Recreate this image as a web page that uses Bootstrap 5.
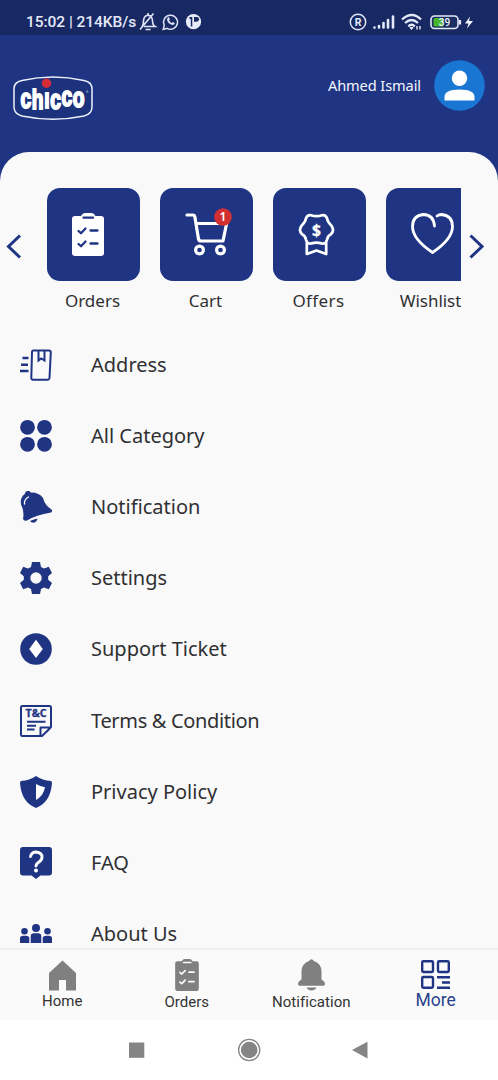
<!DOCTYPE html>
<html lang="en">
<head>
<meta charset="utf-8">
<meta name="viewport" content="width=device-width, initial-scale=1">
<title>Chicco – More</title>
<link rel="stylesheet" href="https://cdn.jsdelivr.net/npm/bootstrap@5.3.0/dist/css/bootstrap.min.css">
<style>
:root{--navy:#1f3584;--ink:#303032}
body{font-family:"Noto Sans","Open Sans",sans-serif;color:var(--ink);background:#1f3584}
svg{display:block;flex:none;overflow:visible}
.phone{width:498px;height:1080px}
.status{height:35px;background:#182863;color:#e4e9f8;padding:8px 23px 0 26px;font:500 15.5px/28px Roboto,sans-serif}
.clock-text{width:109px;letter-spacing:-.05px}
.brandbar{height:117px;padding:25px 13px 0 14px}
.user-name{font-size:14.6px;line-height:50px;color:#f3f5fc;letter-spacing:-.1px}
.sheet{background:#f9f9fa;border-radius:29px 29px 0 0;min-height:0}
.shortcuts{height:177.5px;padding-top:36px}
.arrow{padding-top:46px}
.arrow-prev{width:47px;padding-left:7px}
.arrow-next{width:37px;padding-left:7px}
.strip{width:414px}
.strip-row{gap:20px}
.tile{width:93px}
.tile-box{width:93px;height:93px;border-radius:13px;background:var(--navy)}
.tile-name{font-size:17px;line-height:24px;margin:8px 2px 0 0}
.menu-row{height:71.1px;padding:0 20px;color:var(--ink)}
.menu-name{font-size:20px;line-height:28px;margin-left:39px}
.tabs{height:72px;background:#fafafa;border-top:2px solid #f1f1f2;font:15px/18px Roboto,sans-serif;color:#333}
.tab-col{width:124.5px;padding-top:9px}
.tab-name{margin-top:2px}
.sysnav{height:60px;background:#fff}
</style>
</head>
<body>
<svg width="0" height="0" class="position-absolute" aria-hidden="true">
  <defs>
    <mask id="clipmask" maskUnits="userSpaceOnUse" x="0" y="0" width="32" height="43">
      <rect width="32" height="43" fill="#fff"/>
      <path d="M11.500 4.700h9.500" stroke="#000" stroke-width="2.300" stroke-linecap="round"/>
      <path d="M6.500 18l2.500 2.200 4.500-4.700M18.500 17.500h7M6.500 31l2.500 2.200 4.500-4.700M18.500 30.500h7" fill="none" stroke="#000" stroke-width="2.300" stroke-linecap="round" stroke-linejoin="round"/>
    </mask>
    <symbol id="clip" viewBox="0 0 32 43">
      <path mask="url(#clipmask)" d="M3 3h6q1.500-3 4-3h6.500q2.500 0 4 3H29q3 0 3 3v34q0 3-3 3H3q-3 0-3-3V6q0-3 3-3z" fill="currentColor"/>
    </symbol>
  </defs>
</svg>
<div class="phone d-flex flex-column overflow-hidden">
  <div class="status d-flex flex-shrink-0">
    <span class="clock-text text-nowrap">15:02 | 214KB/s</span>
    <svg style="margin:4px 0 0 4px" width="18" height="20" viewBox="0 0 18 20" fill="none" stroke="#dfe5f6" stroke-width="1.600"><path d="M3 14.500q1.500-1.500 1.500-6Q5 3.500 9 3.200q4 .3 4.500 5.300 0 4.500 2.500 6H5M9 1v2M6.500 17.500h5M1 17.500L14.500 1.500"/></svg>
    <svg style="margin:5px 0 0 5px" width="17" height="18" viewBox="0 0 17 18"><path d="M1.200 16.500l1-4.200A7 7 0 1 1 5 15.300z" fill="none" stroke="#dfe5f6" stroke-width="1.500"/><path d="M5.500 5q1.500-1.500 2 .3l.3 1-.7 1.200q1 1.700 2.700 2.400l1.200-1 1.700 1q0 2-2.200 2Q6 11 5 7z" fill="#dfe5f6"/></svg>
    <svg style="margin:5px 0 0 6px" width="16" height="18" viewBox="0 0 16 18"><circle cx="8.500" cy="8.700" r="7.600" fill="#e8ecf8"/><path d="M4.500 4h2.800v9.500H5.800V6H4.500zM9 4h3q2.500.5 2 3-1 2-3 1.800H9z" fill="#182863"/></svg>
    <svg class="ms-auto" style="margin-top:5px" width="18" height="18" viewBox="0 0 18 18"><circle cx="9" cy="9" r="7.700" fill="none" stroke="#dfe5f6" stroke-width="1.500"/><text x="9" y="12.800" text-anchor="middle" font-family="Roboto" font-size="10.500" font-weight="700" fill="#e8ecf8">R</text></svg>
    <svg style="margin:7px 0 0 6px" width="22" height="14" viewBox="0 0 22 14" stroke="#e4e9f8" stroke-width="2.600" stroke-linecap="round"><path d="M1.500 12.500v.1M6 12.500V11M10.500 12.500V8M15 12.500V5M20 12.500V1.500"/></svg>
    <svg style="margin:6px 0 0 6px" width="22" height="17" viewBox="0 0 22 17" fill="none" stroke="#e4e9f8" stroke-width="2.300"><path d="M1 5.500Q11-3.500 20 5.500M4 9q6.500-6 13 0M7.300 12.300q3.300-3 6.500 0"/><path d="M9 13.500h3l-1.500 2z" fill="#e4e9f8" stroke-width="1"/><path d="M16 12v3.500M19 12v3.500" stroke-width="1.400"/></svg>
    <svg style="margin:7px 1px 0 7px" width="44" height="15" viewBox="0 0 44 15"><rect x="1" y="1" width="27" height="12.500" rx="3.500" fill="#1b2e63" stroke="#e4e9f8" stroke-width="1.600"/><rect x="3.500" y="3" width="10" height="8.500" rx="1.500" fill="#45b52c"/><path d="M30 5v4.500" stroke="#e4e9f8" stroke-width="2.200"/><text x="14.500" y="11" text-anchor="middle" font-family="Roboto" font-size="10" font-weight="500" fill="#f2f5fb">39</text><path d="M40 1.500l-5 7h3.500L37 13.500l6-7.500h-4z" fill="#f2f5fb"/></svg>
  </div>

  <header class="brandbar d-flex justify-content-between flex-shrink-0">
    <svg style="margin:16px 0 0 -1px" width="80" height="45" viewBox="0 0 80 45">
      <path d="M9 4.500Q40-2.500 71 4.500 79 6 79 13v18q0 7-8 9-31 6.500-62 0-8-2-8-9V13Q1 6 9 4.500z" fill="#1c327c" stroke="#eef1fa" stroke-width="1.500"/>
      <g transform="translate(7.500 31.500) scale(.7 1)">
        <text font-family="Liberation Sans" font-weight="700" font-size="27.500" fill="#fff" stroke="#fff" stroke-width="2" letter-spacing=".9">c<tspan dy="1">h</tspan><tspan dy="-1">ı</tspan><tspan dy="1">c</tspan><tspan dy="-2.500">c</tspan><tspan dy="1">o</tspan></text>
      </g>
      <circle cx="33.500" cy="7.300" r="4.700" fill="#d82b38"/>
      <circle cx="74.300" cy="15.500" r=".8" fill="none" stroke="#dfe5f6" stroke-width=".5"/>
    </svg>
    <div class="d-flex">
      <span class="user-name">Ahmed Ismail</span>
      <svg style="margin-left:13px" width="51" height="51" viewBox="0 0 51 51"><circle cx="25.500" cy="25.500" r="25.300" fill="#1976d3"/><circle cx="25.500" cy="18.300" r="7.700" fill="#fff"/><path d="M10.500 40.500v-3.500q0-7.500 15-7.500t15 7.500v3.500z" fill="#fff"/></svg>
    </div>
  </header>

  <main class="sheet flex-grow-1 overflow-hidden">
    <section class="shortcuts d-flex">
      <div class="arrow arrow-prev flex-shrink-0"><svg width="15" height="25" viewBox="0 0 15 25" fill="none" stroke="#1f3584" stroke-width="3"><path d="M13 1.500L1.500 12.500 13 23.500"/></svg></div>
      <div class="strip overflow-hidden flex-shrink-0">
        <div class="strip-row d-flex">
          <div class="tile d-flex flex-column align-items-center flex-shrink-0">
            <div class="tile-box"><svg style="margin:25px 0 0 25px" width="32" height="43" color="#fff"><use href="#clip"/></svg></div>
            <span class="tile-name">Orders</span>
          </div>
          <div class="tile d-flex flex-column align-items-center flex-shrink-0">
            <div class="tile-box position-relative">
              <svg style="margin:24px 0 0 25px" width="44" height="45" viewBox="0 0 44 45" fill="none" stroke="#fff" stroke-width="3.200" stroke-linecap="round" stroke-linejoin="round"><path d="M2 3h6.500q1 0 1.300 1.500L13.500 27q.5 2 2.500 2h22l3.500-17M11 11.500h22"/><circle cx="14.500" cy="38" r="3.900"/><circle cx="35.500" cy="38" r="3.900"/></svg>
              <svg class="position-absolute" style="left:54px;top:20px" width="18" height="18" viewBox="0 0 18 18"><circle cx="9" cy="9" r="8.800" fill="#d32f31"/><text x="9" y="13.300" text-anchor="middle" font-family="Noto Sans" font-size="12" font-weight="600" fill="#fff">1</text></svg>
            </div>
            <span class="tile-name">Cart</span>
          </div>
          <div class="tile d-flex flex-column align-items-center flex-shrink-0">
            <div class="tile-box"><svg style="margin:25px 0 0 25px" width="37" height="43" viewBox="0 0 37 43" fill="none" stroke="#fff" stroke-width="2.700" stroke-linejoin="round"><path d="M13 2.200q5.500 2 11 0 3.500-.7 5 3 .5 4 4 7 4 5 0 9-3.500 2-4 5.500-1 4.500-5.500 3.700-5-1.700-10 0-4.500.8-5.500-3.700-.5-3.500-4-5.500-4-4 0-9 3.500-3 4-7 1.500-3.700 5-3zM8.800 29.500V41l9.700-3.500 9.700 3.500V29.500"/><text transform="translate(18.500 22.500) scale(.95 1)" text-anchor="middle" font-family="Noto Sans" font-size="16.500" font-weight="700" fill="#fff" stroke="#fff" stroke-width=".3">$</text></svg></div>
            <span class="tile-name" style="letter-spacing:.4px">Offers</span>
          </div>
          <div class="tile d-flex flex-column align-items-center flex-shrink-0">
            <div class="tile-box"><svg style="margin:25px 0 0 25px" width="43" height="42" viewBox="0 0 43 42" fill="none" stroke="#fff" stroke-width="2.800" stroke-linecap="round" stroke-linejoin="round"><path d="M23.500 13Q22.500 1.700 12.500 1.500 1.500 2.500 1.500 13.500 1.500 26 21.500 39.500 41.500 26 41.500 13.500q0-11-11-12-2.500 0-4.500 1.500"/></svg></div>
            <span class="tile-name text-nowrap" style="letter-spacing:-.05px;margin-right:4px">Wishlist</span>
          </div>
        </div>
      </div>
      <div class="arrow arrow-next flex-shrink-0"><svg width="16" height="25" viewBox="0 0 16 25" fill="none" stroke="#1f3584" stroke-width="3"><path d="M2.500 1.500L14 12.500l-11.500 11"/></svg></div>
    </section>

    <nav class="d-flex flex-column">
      <a class="menu-row d-flex align-items-center flex-shrink-0 text-decoration-none"><svg width="32" height="32" viewBox="0 0 32 32" fill="none" stroke="#1f3584"><path d="M13 1.500h16q1.800 0 1.800 2L29.500 29q-.2 1.700-1.800 1.700H13q-1.800 0-1.700-2L12 3q0-1.500 1-1.500zM18.500 2v9.500l2.700-2 3.300 2V2" stroke-width="2"/><path d="M2.500 9h6M1 15.700h7M0 22h8.500" stroke-width="2.500"/></svg><span class="menu-name">Address</span></a>
      <a class="menu-row d-flex align-items-center flex-shrink-0 text-decoration-none"><svg width="32" height="32" viewBox="0 0 32 32" fill="#1f3584"><circle cx="7.500" cy="7.300" r="7.400"/><circle cx="24.500" cy="7.300" r="7.400"/><circle cx="7.500" cy="24.300" r="7.400"/><circle cx="24.500" cy="24.300" r="7.400"/></svg><span class="menu-name">All Category</span></a>
      <a class="menu-row d-flex align-items-center flex-shrink-0 text-decoration-none"><svg width="32" height="32" viewBox="0 0 32 32"><path d="M4.800 3Q5.500-.5 8.500.1q1.500 0 2 1.400 8.500-.3 12.500 5.500 2 7.500 8.500 11.500 1.500 2-.5 3-15 2.500-24 8-3.500.8-4-1.700Q4.500 21 1.200 14-.5 7 4.800 3zM10 30q4-2 7.500-2.500-.5 3.500-4 4.300-2.500 0-3.500-1.800z" fill="#1f3584"/><path d="M4.500 13Q4 8.500 8.500 6" fill="none" stroke="#f9f9fa" stroke-width="1.300" stroke-linecap="round"/></svg><span class="menu-name">Notification</span></a>
      <a class="menu-row d-flex align-items-center flex-shrink-0 text-decoration-none"><svg width="32" height="32" viewBox="0 0 32 32"><path fill="#1f3584" fill-rule="evenodd" d="M12 0h8l1 5 3 1.600 4.800-1.800L32 11l-3.800 3.300v3.400L32 21l-3.200 6.200-4.800-1.800-3 1.600-1 5h-8l-1-5-3-1.600-4.800 1.800L0 21l3.800-3.300v-3.400L0 11l3.200-6.200L8 6.600 11 5zM16 10.300a5.700 5.700 0 1 0 0 11.400 5.700 5.700 0 0 0 0-11.400z"/></svg><span class="menu-name">Settings</span></a>
      <a class="menu-row d-flex align-items-center flex-shrink-0 text-decoration-none"><svg width="32" height="32" viewBox="0 0 32 32"><circle cx="16" cy="16" r="15.800" fill="#1f3584"/><path d="M16 6.800L22.800 16 16 25 9.200 16z" fill="#fff"/></svg><span class="menu-name">Support Ticket</span></a>
      <a class="menu-row d-flex align-items-center flex-shrink-0 text-decoration-none"><svg width="32" height="32" viewBox="0 0 32 32" fill="none" stroke="#1f3584" stroke-width="2" stroke-linejoin="round"><path d="M2.500 1h27q1.500 0 1.500 1.500V22q-4 4.500-9 9H2.500Q1 31 1 29.500v-27Q1 1 2.500 1zM20.500 31v-8.500H31M7 16.700h18.500M7 20.800h9M7 24.500h7.500"/><text x="16" y="12.300" text-anchor="middle" font-family="Open Sans" font-size="10" font-weight="700" fill="#1f3584" stroke-width=".3" textLength="21" lengthAdjust="spacingAndGlyphs">T&amp;C</text></svg><span class="menu-name" style="letter-spacing:-.33px">Terms &amp; Condition</span></a>
      <a class="menu-row d-flex align-items-center flex-shrink-0 text-decoration-none"><svg width="32" height="32" viewBox="0 0 32 32"><path d="M16 0q6.500 4.500 15 5 1 .5 1 2-1.500 19.500-16 25Q1.500 26.500 0 7q0-1.500 1-2 8.500-.5 15-5z" fill="#1f3584"/><path d="M16 8q4.500 2.500 9 3.300-1.500 8.500-9 12.700z" fill="#fff"/></svg><span class="menu-name">Privacy Policy</span></a>
      <a class="menu-row d-flex align-items-center flex-shrink-0 text-decoration-none"><svg width="32" height="32" viewBox="0 0 32 32"><path d="M3 0h26q3 0 3 3v22.500q0 3-3 3h-8.500L16 32l-4.500-3.500H3q-3 0-3-3V3q0-3 3-3z" fill="#1f3584"/><path d="M10.500 9.500q1-4.500 5.700-4.500 5.800.5 5.800 5.300 0 2.700-3 4.700-3 1.800-3 4" fill="none" stroke="#fff" stroke-width="2.900" stroke-linecap="round"/><circle cx="16" cy="23.500" r="2" fill="#fff"/></svg><span class="menu-name">FAQ</span></a>
      <a class="menu-row d-flex align-items-center flex-shrink-0 text-decoration-none"><svg width="32" height="19" viewBox="0 0 32 19" fill="#1f3584"><circle cx="16" cy="4" r="4"/><circle cx="4.500" cy="7.300" r="3.300"/><circle cx="27.500" cy="7.300" r="3.300"/><path d="M10.700 19v-6.500q0-3.300 3.300-3.300h4q3.300 0 3.300 3.300V19zM0 19v-4.500Q0 11.700 3 11.700h3q3.300 0 3.300 2.800V19zM22.700 19v-4.500q0-2.800 3.300-2.800h3q3 0 3 2.800V19z"/></svg><span class="menu-name">About Us</span></a>
    </nav>
  </main>

  <footer class="tabs d-flex flex-shrink-0 text-center">
    <div class="tab-col d-flex flex-column align-items-center"><svg style="margin-top:1px" width="27" height="31" viewBox="0 0 27 31"><path d="M13.500.5L27 13v17.500H17V20h-7v10.500H0V13z" fill="#808080"/></svg><span class="tab-name" style="margin-top:1px">Home</span></div>
    <div class="tab-col d-flex flex-column align-items-center"><svg width="24" height="32" color="#808080"><use href="#clip"/></svg><span class="tab-name">Orders</span></div>
    <div class="tab-col d-flex flex-column align-items-center"><svg width="27" height="32" viewBox="0 0 27 32" fill="#808080"><path d="M11 2Q13.500-1.500 16 2q7 2.500 7.500 10v8.500q3.500 2 3.500 4.500 0 1.700-1.700 1.700H1.700Q0 26.700 0 25q0-2.500 3.500-4.500V12Q4 4.500 11 2zM8.500 28.500h10q-1.500 3-5 3t-5-3z"/></svg><span class="tab-name" style="letter-spacing:.05px">Notification</span></div>
    <div class="tab-col d-flex flex-column align-items-center" style="color:#29428d"><svg style="margin-top:1px" width="29" height="29" viewBox="0 0 29 29" fill="none" stroke="#1f3584" stroke-width="2.400"><rect x="1.200" y="1.200" width="10.800" height="10.800" rx="1.200"/><rect x="17" y="1.200" width="10.800" height="10.800" rx="1.200"/><rect x="1.200" y="17" width="10.800" height="10.800" rx="1.200"/><path d="M16 17.200h13M21 22.500h8M16 27.800h13"/></svg><span class="tab-name" style="font-size:17.500px;margin-top:2px">More</span></div>
  </footer>
  <div class="sysnav d-flex justify-content-center align-items-center flex-shrink-0">
    <svg width="240" height="24" viewBox="0 0 240 24" fill="#858585"><path d="M0 4.500h15.300v15.300H0z"/><circle cx="120.200" cy="12" r="10.600" fill="none" stroke="#858585" stroke-width="1.300"/><circle cx="120.200" cy="12" r="8.300"/><path d="M223 12l15.500-8.300v16.800z"/></svg>
  </div>
</div>
<script src="https://cdn.jsdelivr.net/npm/bootstrap@5.3.0/dist/js/bootstrap.bundle.min.js"></script>
</body>
</html>
